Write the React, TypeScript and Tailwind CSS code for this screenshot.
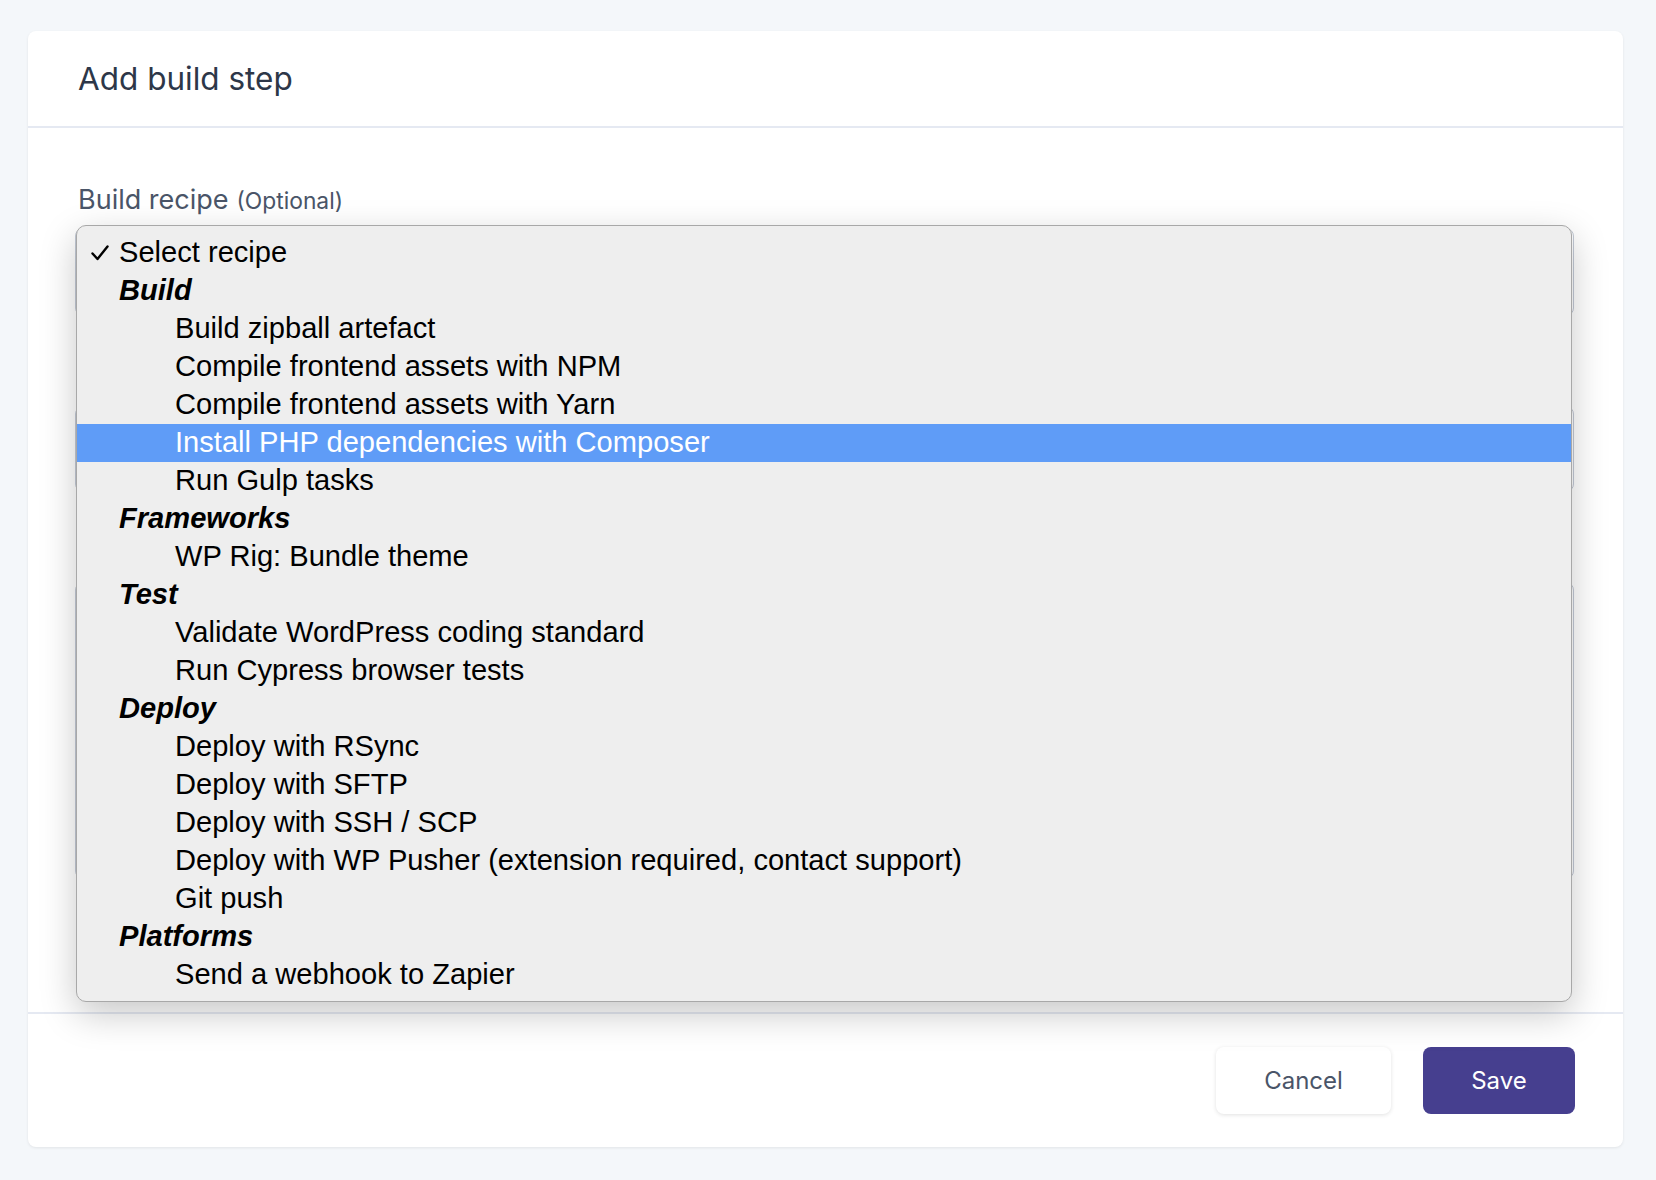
import React from "react";

type Option = { label: string; group?: boolean; selected?: boolean; active?: boolean };

const options: Option[] = [
  { label: "Select recipe", selected: true },
  { label: "Build", group: true },
  { label: "Build zipball artefact" },
  { label: "Compile frontend assets with NPM" },
  { label: "Compile frontend assets with Yarn" },
  { label: "Install PHP dependencies with Composer", active: true },
  { label: "Run Gulp tasks" },
  { label: "Frameworks", group: true },
  { label: "WP Rig: Bundle theme" },
  { label: "Test", group: true },
  { label: "Validate WordPress coding standard" },
  { label: "Run Cypress browser tests" },
  { label: "Deploy", group: true },
  { label: "Deploy with RSync" },
  { label: "Deploy with SFTP" },
  { label: "Deploy with SSH / SCP" },
  { label: "Deploy with WP Pusher (extension required, contact support)" },
  { label: "Git push" },
  { label: "Platforms", group: true },
  { label: "Send a webhook to Zapier" },
];

function RecipeMenu() {
  return (
    <div className="absolute left-[48px] top-[97px] w-[1496px] rounded-[10px] border border-[#a8a8a8] bg-[#eeeeee] pt-[8px] pb-[7px] shadow-[0_12px_36px_rgba(0,0,0,0.22)] font-['Liberation_Sans',Arial,sans-serif] text-[29.1px] text-black">
      {options.map((o) => (
        <div
          key={o.label}
          className={
            "relative flex h-[38px] items-center whitespace-nowrap " +
            (o.active ? "bg-[#5f9cf7] text-white " : "") +
            (o.group ? "pl-[42px] font-bold italic" : o.selected ? "pl-[42px]" : "pl-[98px]")
          }
        >
          {o.selected && (
            <svg
              className="absolute left-[14px] top-[11px]"
              width="18"
              height="16"
              viewBox="0 0 18 16"
              fill="none"
            >
              <path d="M1.5 8.5 L6.5 14 L16.5 1.5" stroke="#000" strokeWidth="2.4" strokeLinecap="round" strokeLinejoin="round" />
            </svg>
          )}
          {o.label}
        </div>
      ))}
    </div>
  );
}

export default function App() {
  return (
    <div className="min-h-[1180px] bg-[#f4f7fa] pl-[28px] pt-[31px] font-['Inter',sans-serif]">
      <div className="w-[1595px] rounded-[8px] bg-white shadow-[0_1px_3px_rgba(0,0,0,0.08)]">
        {/* header */}
        <div className="flex h-[97px] items-center border-b-2 border-[#e5e9f2] pl-[50px]">
          <h2 className="text-[31.5px] text-[#2d3748]">Add build step</h2>
        </div>

        {/* body */}
        <div className="relative h-[884px] px-[50px] pt-[52px]">
          <label className="flex h-[36px] items-baseline gap-[8px] text-[27px] text-[#4a5568]">
            Build recipe <span className="text-[22.8px]">(Optional)</span>
          </label>
          <div className="mt-[12px] h-[88px] w-[1499px] -ml-[3px] rounded-[8px] border border-[#c3cad6] bg-white" />
          <div className="mt-[90px] h-[86px] w-[1499px] -ml-[3px] rounded-[8px] border border-[#c3cad6] bg-white" />
          <div className="mt-[90px] h-[297px] w-[1499px] -ml-[3px] rounded-[8px] border border-[#c3cad6] bg-white" />
          <RecipeMenu />
        </div>

        {/* footer */}
        <div className="flex h-[135px] items-center justify-end gap-[32px] border-t-2 border-[#e5e9f2] pr-[48px]">
          <button className="h-[67px] w-[175px] rounded-[8px] bg-white text-[24px] text-[#4a5568] shadow-[0_1px_4px_rgba(0,0,0,0.12)]">
            Cancel
          </button>
          <button className="h-[67px] w-[152px] rounded-[8px] bg-[#463f8f] text-[24px] text-white">
            Save
          </button>
        </div>
      </div>
    </div>
  );
}
